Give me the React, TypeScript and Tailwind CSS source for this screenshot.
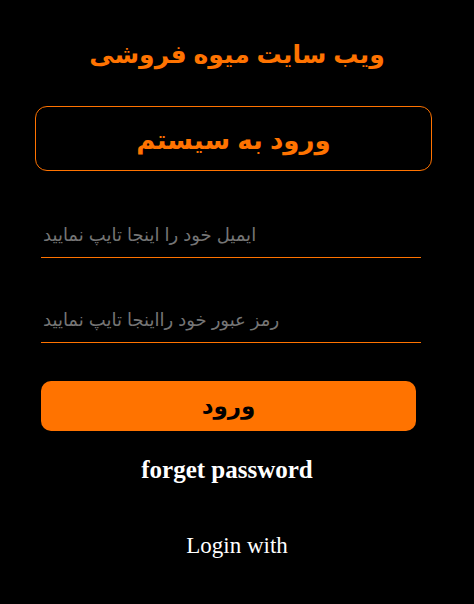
const orange = "text-[#ff7300]";

export default function App() {
  return (
    <div className="min-h-screen w-full bg-black font-['Liberation_Serif','DejaVu_Sans',serif]">
      <h1 className={`pt-[34px] text-center text-[25px] leading-[40px] font-bold font-['Liberation_Sans','DejaVu_Sans',sans-serif] ${orange}`} dir="rtl">
        ویب سایت میوه فروشی
      </h1>

      <div className="mt-[32px] ml-[35px] flex h-[65px] w-[397px] items-center justify-center rounded-[12px] border border-[#ff7300] pt-[4px]">
        <span dir="rtl" className={`text-[26px] font-bold font-['Liberation_Sans','DejaVu_Sans',sans-serif] ${orange}`}>
          ورود به سیستم
        </span>
      </div>

      <div className="ml-[41px] w-[380px]">
        <input
          type="email"
          placeholder="ایمیل خود را اینجا تایپ نمایید"
          className="mt-[46px] block h-[41px] w-full border-b border-[#ff7300] bg-transparent pl-[2px] pb-[3px] text-[18px] text-white outline-none placeholder:text-[#757575] font-['Liberation_Sans','DejaVu_Sans',sans-serif]"
        />
        <input
          type="password"
          placeholder="رمز عبور خود رااینجا تایپ نمایید"
          className="mt-[44px] block h-[41px] w-full border-b border-[#ff7300] bg-transparent pl-[2px] pb-[3px] text-[18px] text-white outline-none placeholder:text-[#757575] font-['Liberation_Sans','DejaVu_Sans',sans-serif]"
        />
      </div>

      <button className="mt-[38px] ml-[41px] flex h-[50px] w-[375px] items-center justify-center rounded-[10px] bg-[#ff7300] text-[23px] font-bold text-black font-['Liberation_Sans','DejaVu_Sans',sans-serif]">
        <span dir="rtl">ورود</span>
      </button>

      <p className="mt-[24px] pr-[20px] text-center text-[25px] font-bold leading-[30px] text-white">
        forget password
      </p>

      <p className="mt-[47px] text-center text-[23px] leading-[28px] text-white">
        Login with
      </p>
    </div>
  );
}
